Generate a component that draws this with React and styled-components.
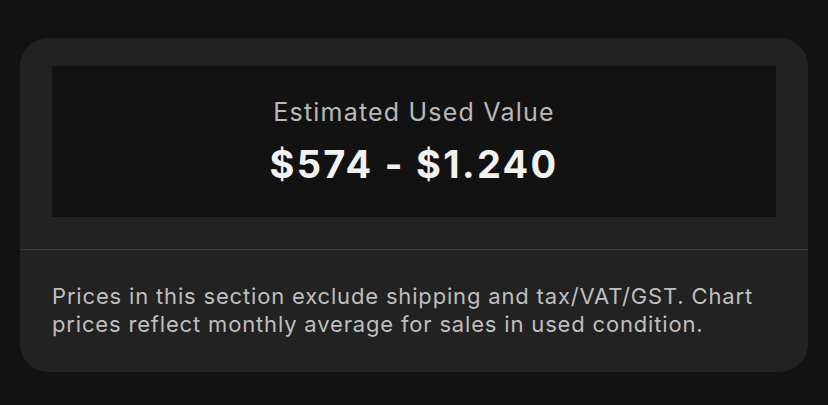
import React from "react";
import styled, { createGlobalStyle } from "styled-components";

const GlobalStyle = createGlobalStyle`
  html, body {
    margin: 0;
    padding: 0;
    background: #121212;
  }
  body {
    font-family: Inter, "Noto Sans", "Liberation Sans", sans-serif;
    -webkit-font-smoothing: antialiased;
  }
`;

const Page = styled.div`
  padding: 38px 20px 33px;
`;

const Card = styled.section`
  background: #222222;
  border-radius: 28px;
  overflow: hidden;
`;

const Top = styled.div`
  padding: 28px 32px 32px;
  border-bottom: 1px solid #3a3a3a;
`;

const ValueBox = styled.div`
  height: 151px;
  box-sizing: border-box;
  padding-bottom: 1px;
  background: #121212;
  display: flex;
  flex-direction: column;
  align-items: center;
  justify-content: center;
  gap: 15px;
`;

const Label = styled.div`
  color: #b9b9b9;
  font-size: 25px;
  line-height: 30px;
  font-weight: 400;
  letter-spacing: 1.2px;
`;

const Range = styled.div`
  color: #f2f2f2;
  font-size: 38px;
  line-height: 44px;
  font-weight: 700;
  letter-spacing: 2.3px;
`;

const Note = styled.p`
  margin: 0;
  padding: 32px 32px 34px;
  color: #bfbfbf;
  font-size: 22px;
  line-height: 28px;
  letter-spacing: 0.83px;
`;

export default function App() {
  return (
    <>
      <GlobalStyle />
      <Page>
        <Card>
          <Top>
            <ValueBox>
              <Label>Estimated Used Value</Label>
              <Range>$574 - $1.240</Range>
            </ValueBox>
          </Top>
          <Note>
            Prices in this section exclude shipping and tax/VAT/GST. Chart
            prices reflect monthly average for sales in used condition.
          </Note>
        </Card>
      </Page>
    </>
  );
}
